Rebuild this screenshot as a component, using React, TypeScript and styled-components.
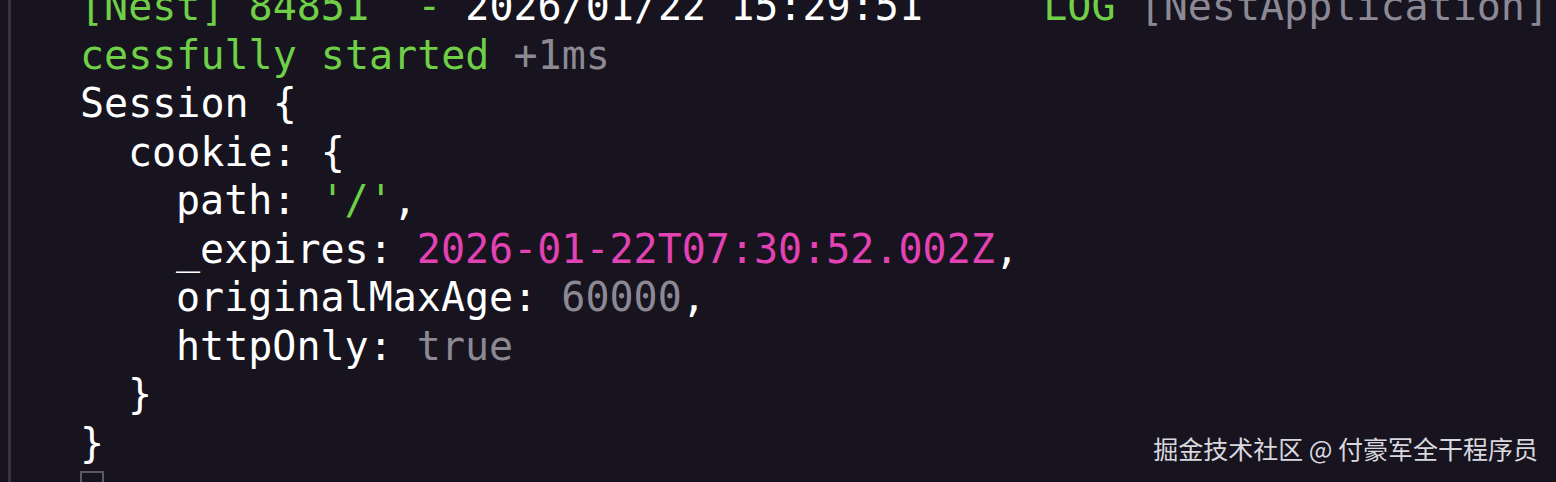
import React from "react";
import styled, { createGlobalStyle } from "styled-components";

const Global = createGlobalStyle`
  html, body { margin: 0; padding: 0; background: #17141f; }
  body { width: 1556px; height: 482px; overflow: hidden; }
`;

const Screen = styled.div`
  position: relative;
  width: 1556px;
  height: 482px;
  overflow: hidden;
  background: #17141f;
  display: flex;
`;

const Gutter = styled.div`
  width: 8px;
  flex: none;
`;

const Divider = styled.div`
  width: 3px;
  flex: none;
  background: #383543;
`;

const Pane = styled.div`
  flex: 1;
  padding-left: 69px;
  margin-top: -18px;
  font-family: "DejaVu Sans Mono", "Liberation Mono", monospace;
  font-size: 40px;
  line-height: 48.5px;
  color: #ffffff;
  white-space: pre;
`;

const Line = styled.div<{ $indent?: number }>`
  height: 48.5px;
  padding-left: ${(p) => (p.$indent ?? 0) * 24}px;
`;

const tone = {
  green: "#6fcf47",
  white: "#ffffff",
  gray: "#8c8995",
  pink: "#e342b4",
} as const;

const Tok = styled.span<{ $c: keyof typeof tone }>`
  color: ${(p) => tone[p.$c]};
`;

const Cursor = styled.div`
  width: 20px;
  height: 18px;
  margin-top: 4px;
  border: 2px solid #5b5866;
`;

const Watermark = styled.div`
  position: absolute;
  right: 18px;
  bottom: 16px;
  font-family: "Noto Sans CJK SC", "Noto Sans", sans-serif;
  font-size: 25px;
  color: #d9d8de;
  white-space: pre;
`;

export default function App() {
  return (
    <Screen>
      <Global />
      <Gutter />
      <Divider />
      <Pane>
        <Line>
          <Tok $c="green">[Nest] 84851  - </Tok>
          <Tok $c="white">2026/01/22 15:29:51     </Tok>
          <Tok $c="green">LOG </Tok>
          <Tok $c="gray">[NestApplication]</Tok>
        </Line>
        <Line>
          <Tok $c="green">cessfully started </Tok>
          <Tok $c="gray">+1ms</Tok>
        </Line>
        <Line>Session {"{"}</Line>
        <Line $indent={2}>cookie: {"{"}</Line>
        <Line $indent={4}>
          path: <Tok $c="green">'/'</Tok>,
        </Line>
        <Line $indent={4}>
          _expires: <Tok $c="pink">2026-01-22T07:30:52.002Z</Tok>,
        </Line>
        <Line $indent={4}>
          originalMaxAge: <Tok $c="gray">60000</Tok>,
        </Line>
        <Line $indent={4}>
          httpOnly: <Tok $c="gray">true</Tok>
        </Line>
        <Line $indent={2}>{"}"}</Line>
        <Line>{"}"}</Line>
        <Line>
          <Cursor />
        </Line>
      </Pane>
      <Watermark>掘金技术社区 @ 付豪军全干程序员</Watermark>
    </Screen>
  );
}
